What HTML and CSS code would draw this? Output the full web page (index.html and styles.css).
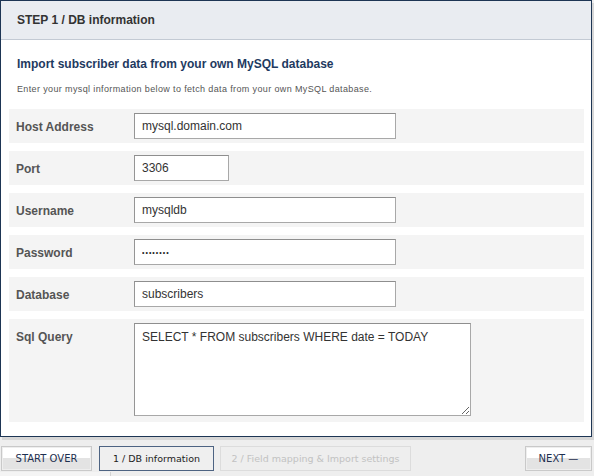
FILE: index.html
```html
<!DOCTYPE html>
<html>
<head>
<meta charset="utf-8">
<link rel="stylesheet" href="styles.css">
</head>
<body>
<div class="panel">
  <div class="panel-head">STEP 1 / DB information</div>
  <div class="panel-body">
    <h2 class="title">Import subscriber data from your own MySQL database</h2>
    <p class="desc">Enter your mysql information below to fetch data from your own MySQL database.</p>
    <div class="rows">
      <div class="row"><label class="lbl">Host Address</label><input class="field wide" type="text" value="mysql.domain.com"></div>
      <div class="row"><label class="lbl">Port</label><input class="field short" type="text" value="3306"></div>
      <div class="row"><label class="lbl">Username</label><input class="field wide" type="text" value="mysqldb"></div>
      <div class="row"><label class="lbl">Password</label><input class="field wide pw" type="password" value="xxxxxxxx"></div>
      <div class="row"><label class="lbl">Database</label><input class="field wide" type="text" value="subscribers"></div>
      <div class="row row-top"><label class="lbl">Sql Query</label><textarea class="field area">SELECT * FROM subscribers WHERE date = TODAY</textarea></div>
    </div>
  </div>
</div>
<div class="nav">
  <div class="btn">START OVER</div>
  <div class="tab active">1 / DB information</div>
  <div class="tab disabled">2 / Field mapping &amp; Import settings</div>
  <div class="spacer"></div>
  <div class="btn next">NEXT —</div>
</div>
<div class="below"></div>
</body>
</html>
```
FILE: styles.css
```css
html, body {
  margin: 0;
  padding: 0;
  background: #eeeeee;
  font-family: "Liberation Sans", Arial, sans-serif;
}

.panel {
  width: 590px;
  border: 1px solid #1d3554;
  background: #ffffff;
  box-shadow: 2px 3px 0 #d6d6d6;
}

.panel-head {
  height: 38px;
  line-height: 38px;
  padding-left: 16px;
  background: #e9ecf1;
  border-bottom: 1px solid #c3cad4;
  font-size: 12px;
  font-weight: bold;
  color: #333333;
}

.panel-body {
  padding: 17px 7px 14px 8px;
}

.title {
  margin: 0 0 12px 8px;
  font-size: 12px;
  line-height: 14px;
  font-weight: bold;
  color: #1e3a5f;
}

.desc {
  margin: 0 0 14px 8px;
  font-size: 9px;
  line-height: 12px;
  color: #555555;
  letter-spacing: 0.37px;
}

.rows {
  display: flex;
  flex-direction: column;
  gap: 8px;
}

.row {
  display: flex;
  align-items: center;
  height: 34px;
  background: #f4f4f4;
}

.row-top {
  align-items: flex-start;
  height: auto;
  padding: 4px 0 6px;
}

.lbl {
  width: 118px;
  padding-left: 7px;
  padding-top: 1px;
  font-size: 12px;
  font-weight: bold;
  color: #555555;
}

.row-top .lbl {
  line-height: 26px;
}

.field {
  box-sizing: border-box;
  height: 26px;
  margin: 0;
  padding: 0 7px;
  border: 1px solid #a8a8a8;
  border-top-color: #8e8e8e;
  border-left-color: #959595;
  background: #ffffff;
  font-family: "Liberation Sans", Arial, sans-serif;
  font-size: 12px;
  color: #333333;
  outline: none;
}

.wide { width: 262px; }
.short { width: 95px; }

.pw {
  font-size: 7px;
  letter-spacing: 1px;
  color: #222222;
}

.area {
  width: 337px;
  height: 93px;
  padding: 6px 7px;
  line-height: 14px;
  resize: both;
}

.nav {
  display: flex;
  align-items: flex-start;
  margin-top: 9px;
  padding: 0 2px 0 1px;
}

.btn {
  box-sizing: border-box;
  width: 91px;
  height: 25px;
  border: 1px solid #c9c9c9;
  padding: 1px;
  display: flex;
  align-items: center;
  justify-content: center;
  font-family: "DejaVu Sans", Verdana, sans-serif;
  font-size: 10px;
  color: #1e3050;
  background-clip: content-box;
  background-image: linear-gradient(#ffffff 0, #ffffff 11px, #e3e3e3 11px);
}

.next {
  width: 67px;
}

.tab {
  box-sizing: border-box;
  height: 25px;
  margin-left: 7px;
  display: flex;
  align-items: center;
  justify-content: center;
  font-family: "DejaVu Sans", Verdana, sans-serif;
  font-size: 9.5px;
}

.active {
  width: 115px;
  border: 1px solid #4d6382;
  background: #efefef;
  color: #222222;
}

.disabled {
  width: 191px;
  margin-left: 6px;
  border: 1px solid #dcdcdc;
  color: #c2c2c2;
}

.spacer { flex: 1; }

.below {
  width: 110px;
  height: 10px;
  margin-top: 1px;
  background: #f4f4f4;
  border-right: 1px solid #d3d3d3;
}
```
